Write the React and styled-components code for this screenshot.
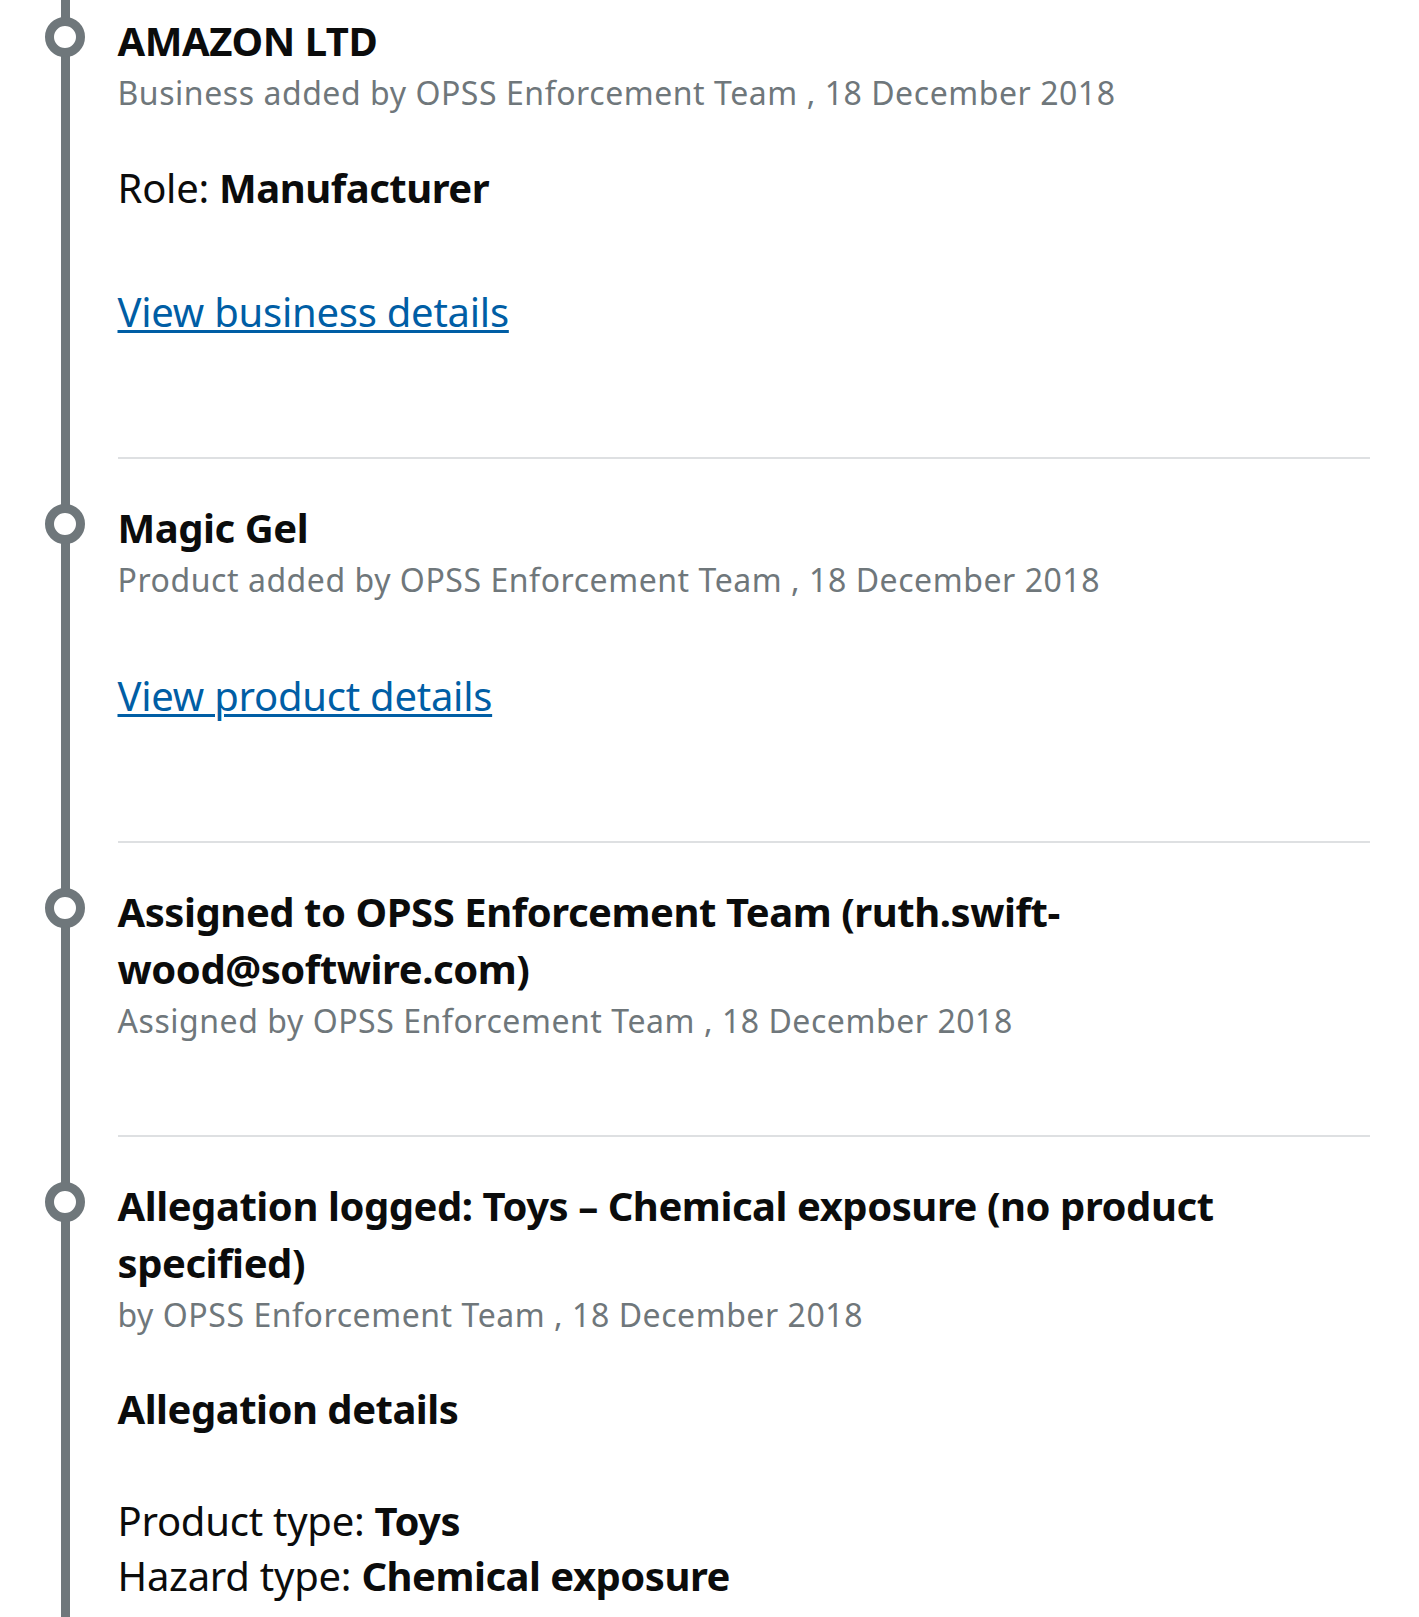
import React from 'react';
import styled, { createGlobalStyle } from 'styled-components';

const GlobalStyle = createGlobalStyle`
  body {
    margin: 0;
    background: #ffffff;
    font-family: "Noto Sans", "Liberation Sans", sans-serif;
    color: #0b0c0c;
  }
`;

const Timeline = styled.ol`
  list-style: none;
  margin: 0;
  padding: 0;
  background: linear-gradient(#6f777b, #6f777b) no-repeat 61px 0 / 9px 100%;
`;

const Event = styled.li`
  display: grid;
  grid-template-columns: 117.5px 1252px;
  align-items: start;
`;

const Marker = styled.span`
  display: block;
  box-sizing: border-box;
  width: 40px;
  height: 40px;
  margin-left: 45px;
  margin-top: ${(p) => (p.$first ? 17 : 45)}px;
  border: 9px solid #6f777b;
  border-radius: 50%;
  background: #ffffff;
`;

const Content = styled.div`
  padding-top: ${(p) => (p.$first ? 12 : 40)}px;
  padding-bottom: ${(p) => p.$bottom}px;
  border-bottom: 2px solid #dee0e2;
`;

const Title = styled.h3`
  margin: 0;
  font-size: 40px;
  line-height: 57px;
  font-weight: 700;
  letter-spacing: -0.45px;
`;

const Meta = styled.p`
  margin: 0;
  font-size: 32px;
  line-height: 47.5px;
  letter-spacing: 0.55px;
  color: #6f777b;
`;

const Detail = styled.p`
  margin: ${(p) => p.$top}px 0 0;
  font-size: 40px;
  line-height: 55.5px;
  letter-spacing: -0.25px;

  strong {
    font-weight: 700;
    letter-spacing: -0.5px;
  }
`;

const SubHeading = styled.h4`
  margin: 41px 0 0;
  font-size: 40px;
  line-height: 57px;
  font-weight: 700;
  letter-spacing: -0.5px;
`;

const LinkRow = styled.p`
  margin: ${(p) => p.$top}px 0 28px;
  font-size: 40px;
  line-height: 55px;
  letter-spacing: -0.25px;
`;

const Link = styled.a`
  color: #005ea5;
  text-decoration: underline;
  text-decoration-thickness: 3px;
  text-underline-offset: 3px;
`;

const events = [
  {
    title: 'AMAZON LTD',
    meta: 'Business added by OPSS Enforcement Team , 18 December 2018',
    role: 'Manufacturer',
    link: 'View business details',
    bottom: 90,
  },
  {
    title: 'Magic Gel',
    meta: 'Product added by OPSS Enforcement Team , 18 December 2018',
    link: 'View product details',
    bottom: 90,
  },
  {
    title: 'Assigned to OPSS Enforcement Team (ruth.swift-wood@softwire.com)',
    meta: 'Assigned by OPSS Enforcement Team , 18 December 2018',
    bottom: 91,
  },
  {
    title: 'Allegation logged: Toys – Chemical exposure (no product specified)',
    meta: 'by OPSS Enforcement Team , 18 December 2018',
    allegation: { product: 'Toys', hazard: 'Chemical exposure' },
    bottom: 90,
  },
];

const App = () => {
  return (
    <>
      <GlobalStyle />
      <Timeline>
        {events.map((e, i) => (
          <Event key={e.title}>
            <Marker $first={i === 0} />
            <Content $first={i === 0} $bottom={e.bottom}>
              <Title>{e.title}</Title>
              <Meta>{e.meta}</Meta>
              {e.role && (
                <Detail $top={43}>
                  Role: <strong>{e.role}</strong>
                </Detail>
              )}
              {e.link && (
                <LinkRow $top={e.role ? 69 : 64}>
                  <Link href="#">{e.link}</Link>
                </LinkRow>
              )}
              {e.allegation && (
                <>
                  <SubHeading>Allegation details</SubHeading>
                  <Detail $top={56}>
                    Product type: <strong>{e.allegation.product}</strong>
                    <br />
                    Hazard type: <strong>{e.allegation.hazard}</strong>
                  </Detail>
                </>
              )}
            </Content>
          </Event>
        ))}
      </Timeline>
    </>
  );
};

export default App;
